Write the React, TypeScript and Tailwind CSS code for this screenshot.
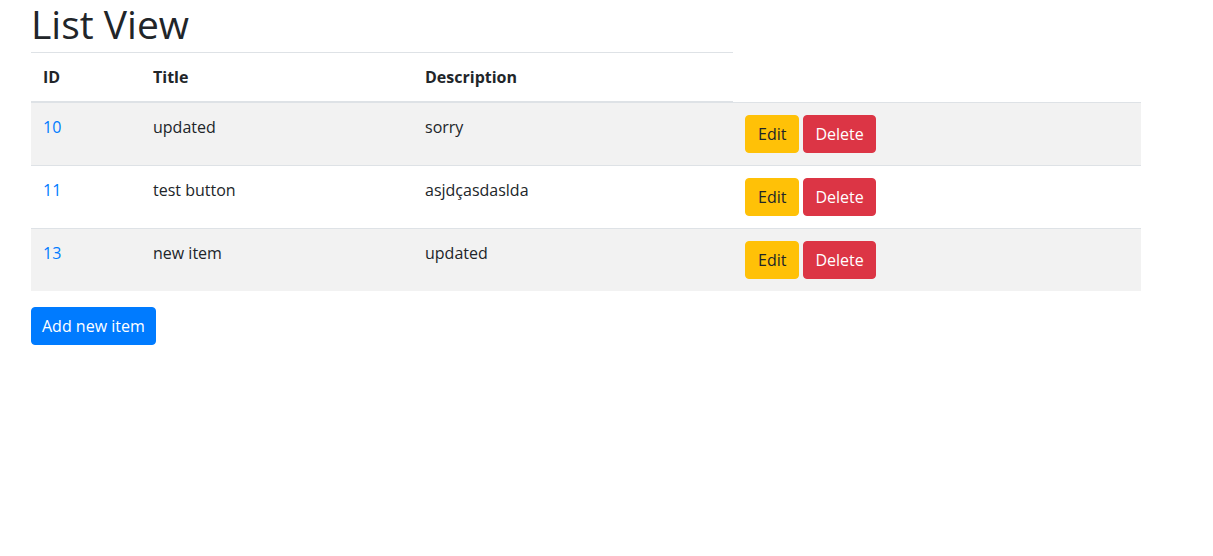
import React from 'react';

interface Item {
  id: number;
  title: string;
  description: string;
}

const items: Item[] = [
  { id: 10, title: 'updated', description: 'sorry' },
  { id: 11, title: 'test button', description: 'asjdçasdaslda' },
  { id: 13, title: 'new item', description: 'updated' },
];

const ItemRow: React.FC<{ item: Item; striped: boolean }> = ({ item, striped }) => (
  <tr className={striped ? 'bg-[#f2f2f2]' : 'bg-white'}>
    <td className="p-3 align-top border-t border-[#dee2e6]">
      <a href="#" className="text-[#007bff]">{item.id}</a>
    </td>
    <td className="p-3 align-top border-t border-[#dee2e6]">{item.title}</td>
    <td className="p-3 align-top border-t border-[#dee2e6]">{item.description}</td>
    <td className="p-3 align-top border-t border-[#dee2e6]">
      <div className="flex gap-1">
        <button className="px-3 py-1.5 border border-[#ffc107] bg-[#ffc107] text-[#212529] rounded leading-6">Edit</button>
        <button className="px-[11px] py-1.5 border border-[#dc3545] bg-[#dc3545] text-white rounded leading-6">Delete</button>
      </div>
    </td>
  </tr>
);

const App: React.FC = () => {
  return (
    <div className="min-h-screen bg-white text-[#212529] text-base leading-6 font-['Open_Sans',sans-serif]">
      <div className="pl-[31px]">
        {/* Heading */}
        <h1 className="text-[39px] leading-[48px] font-medium mb-1">List View</h1>

        {/* Table */}
        <table className="w-[1110px] border-collapse mb-4 text-left">
          <thead>
            <tr>
              <th className="w-[110px] p-3 font-bold border-t border-b-2 border-[#dee2e6]">ID</th>
              <th className="w-[272px] p-3 font-bold border-t border-b-2 border-[#dee2e6]">Title</th>
              <th className="w-[320px] p-3 font-bold border-t border-b-2 border-[#dee2e6]">Description</th>
            </tr>
          </thead>
          <tbody>
            {items.map((item, i) => (
              <ItemRow key={item.id} item={item} striped={i % 2 === 0} />
            ))}
          </tbody>
        </table>

        <button className="px-[10px] py-1.5 border border-[#007bff] bg-[#007bff] text-white rounded leading-6">Add new item</button>
      </div>
    </div>
  );
};

export default App;
